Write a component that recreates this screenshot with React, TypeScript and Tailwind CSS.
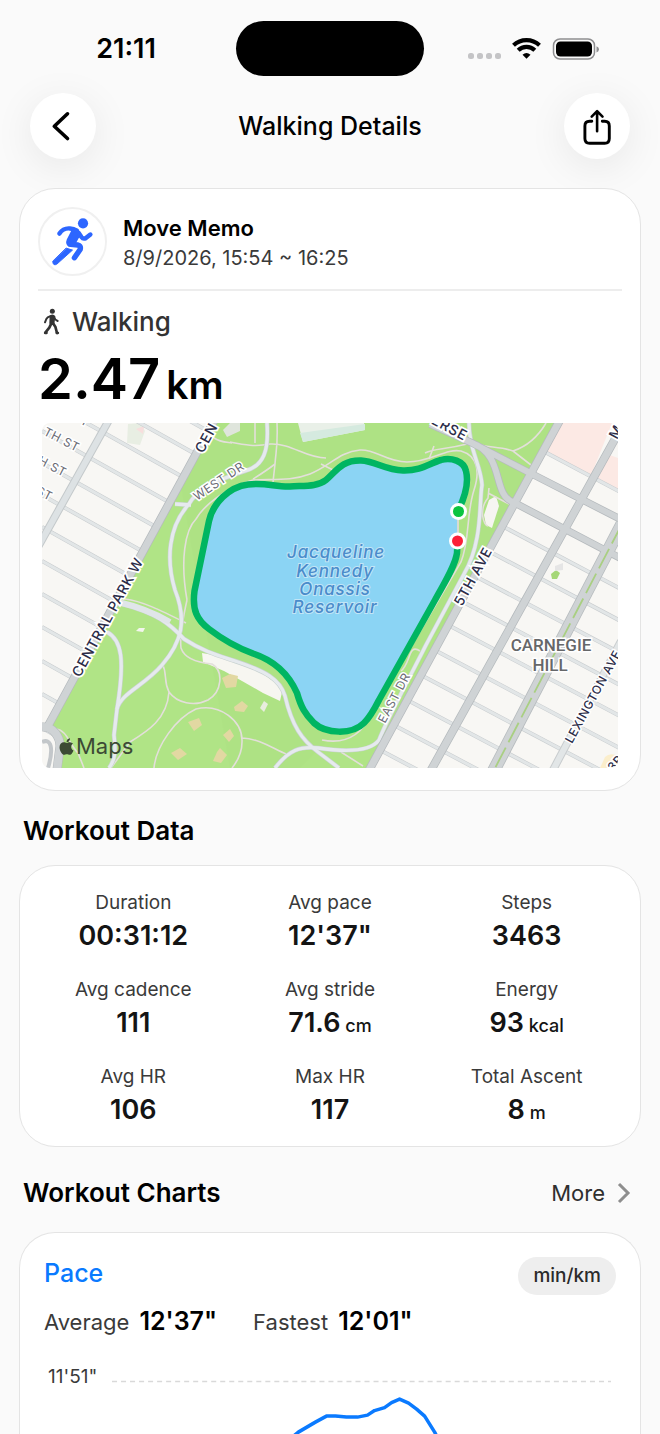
import type { ReactNode } from "react";
import { FaApple } from "react-icons/fa";

type Stat = {
  label: string;
  value: string;
  unit?: string;
};

const stats: Stat[] = [
  { label: "Duration", value: "00:31:12" },
  { label: "Avg pace", value: "12'37\"" },
  { label: "Steps", value: "3463" },
  { label: "Avg cadence", value: "111" },
  { label: "Avg stride", value: "71.6", unit: "cm" },
  { label: "Energy", value: "93", unit: "kcal" },
  { label: "Avg HR", value: "106" },
  { label: "Max HR", value: "117" },
  { label: "Total Ascent", value: "8", unit: "m" },
];

// where each cross street meets the avenue, in map units
const westStreets = [338, 368, 398, 431, 463, 495, 527, 561, 594, 627, 661, 694, 728];
const eastStreets = [451, 526, 551, 576, 601, 625, 650, 675, 700, 725, 750];

const route =
  "M458 511C464 499 469 483 466 471C464 461 451 457 441 460C430 463 421 471 403 470.5C385 470 375 461 361 460.5C341 460 336 472 326 480C317 487 304 485.5 290 486.5C275 487 265 482 248 484.5C229 487 213 503 209 521L194.500 591C192 610 197 620 209 629C222 639 238 648 253 653.500C276 661 289 675 297 693C301 707 305 714 314 723C326 734 352 735 364 723C370 717 375 708 379 700L435 600C443 585 455 567 457 553L457.500 541";

function StatusBar() {
  return (
    <div className="grid grid-cols-[1fr_188px_1fr] items-center px-4 pt-[21px]">
      <span className="pt-[2px] text-center text-[27px] font-semibold">21:11</span>
      <div className="h-[55px] rounded-full bg-black" />
      <div className="flex items-center justify-center">
        <svg viewBox="0 0 132 24" className="h-6 w-[132px]" aria-hidden="true">
          <g fill="#c4c4c6">
            <rect x="0" y="16" width="6" height="6" rx="2.500" />
            <rect x="9" y="16" width="6" height="6" rx="2.500" />
            <rect x="18" y="16" width="6" height="6" rx="2.500" />
            <rect x="27" y="16" width="6" height="6" rx="2.500" />
          </g>
          <g fill="none" stroke="#000" strokeWidth="4.200">
            <path d="M45.500 8.200A19 19 0 0 1 71.500 8.200" />
            <path d="M50.200 13.300A12 12 0 0 1 66.800 13.300" />
          </g>
          <path d="M54.500 17.700A6.200 6.200 0 0 1 62.500 17.700L58.500 21.700Z" />
          <rect x="85.500" y="2" width="41" height="20" rx="6.500" fill="none" stroke="#8e8e90" strokeWidth="1.500" />
          <rect x="88" y="4.500" width="36" height="15" rx="4.500" />
          <path d="M128.500 9.200Q131 10 131 12.200T128.500 15.500Z" fill="#8e8e90" />
        </svg>
      </div>
    </div>
  );
}

function RoundButton({ label, children }: { label: string; children: ReactNode }) {
  return (
    <button
      type="button"
      aria-label={label}
      className="flex size-[66px] items-center justify-center rounded-full bg-white shadow-[0_8px_40px_rgba(0,0,0,0.08)]"
    >
      {children}
    </button>
  );
}

function Header() {
  return (
    <header className="flex items-center justify-between px-[30px] pt-[17px]">
      <RoundButton label="Back">
        <svg viewBox="0 0 66 66" className="size-[66px]" fill="none" stroke="#000" strokeWidth="3.600" strokeLinecap="round" strokeLinejoin="round">
          <path d="M37.500 20.800L24.300 33.200L37.500 45.500" />
        </svg>
      </RoundButton>
      <h1 className="pt-[2px] text-[25px] font-medium">Walking Details</h1>
      <RoundButton label="Share">
        <svg viewBox="0 0 66 66" className="size-[66px]" fill="none" stroke="#000" strokeWidth="2.900" strokeLinecap="round" strokeLinejoin="round">
          <path d="M27.800 28.300H25.500Q20.900 28.300 20.900 33V45.500Q20.900 50.300 25.600 50.300H40.700Q45.300 50.300 45.300 45.500V33Q45.300 28.300 40.700 28.300H38.300" />
          <path d="M33.100 38.200V19M27.700 23.600L33.100 18.200L38.500 23.600" strokeWidth="2.600" />
        </svg>
      </RoundButton>
    </header>
  );
}

function RunnerLogo() {
  return (
    <svg viewBox="84 82 204 204" className="size-[69px] rounded-full border-2 border-[#f0f0f0]" aria-hidden="true">
      <g fill="none" stroke="#2d66ff" strokeLinecap="round" strokeLinejoin="round">
        <circle cx="219" cy="127" r="16" fill="#2d66ff" stroke="none" />
        <path d="M145 159Q157 141 178 143Q190 144 200 150" strokeWidth="14" />
        <path d="M186 152Q206 148 208 160L195 183Q190 196 176 196Q168 190 172 180Z" fill="#2d66ff" strokeWidth="9" />
        <path d="M206 158L214 170Q219 177 227 174L242 162" strokeWidth="14" />
        <path d="M180 193L203 195Q213 198 210 209L192 235" strokeWidth="17" />
        <path d="M167 205L186 211L137 255Q125 262 124 247Z" fill="#2d66ff" strokeWidth="3" />
      </g>
    </svg>
  );
}

function WalkIcon() {
  return (
    <svg viewBox="0 0 60 84" className="h-7 w-5" fill="none" stroke="#333" strokeLinecap="round" strokeLinejoin="round" aria-hidden="true">
      <circle cx="31" cy="10" r="7.500" fill="#333" stroke="none" />
      <path d="M26 24L25 45L34 48L37 26Q33 20 26 24Z" fill="#333" strokeWidth="6" />
      <path d="M25 25Q16 27 13 33L9 43" strokeWidth="6" />
      <path d="M36 27Q39 36 47 39" strokeWidth="6" />
      <path d="M28 46L22 59L10 74M32 44L40 56L45 75" strokeWidth="8" />
      <path d="M9 75H14M44 75H48" strokeWidth="7" />
    </svg>
  );
}

function RouteMap() {
  return (
    <div className="relative overflow-hidden rounded-lg">
      <svg viewBox="42 423 576 345" className="block w-full" role="img" aria-label="Route around the reservoir">
        <rect x="42" y="423" width="576" height="345" fill="#f8f7f4" />

        {/* city blocks west of the park */}
        <path d="M128 424L141 423L145 431L140 445L127 443Z" fill="#e8eee3" />
        <path d="M136 429L144 426L143 434Z" fill="#f7dedd" />
        <g stroke="#c8ccce" strokeWidth="4">
          {westStreets.map((y) => (
            <line key={y} x1="42" y1={y} x2="222" y2={y + 101} />
          ))}
        </g>
        <g stroke="#e2e6e7" strokeWidth="3">
          {westStreets.map((y) => (
            <line key={y} x1="42" y1={y} x2="222" y2={y + 101} />
          ))}
        </g>
        <path d="M109 420L38 547" stroke="#c3c8ca" strokeWidth="8" />
        <path d="M109 420L38 547" stroke="#dde2e4" strokeWidth="6" />

        {/* city blocks east of the park */}
        <path d="M560 423H612L590 478L547 453Z" fill="#fce9e4" />
        <path d="M607 454L618 458V490L596 479Z" fill="#fce9e4" />
        <g stroke="#c8ccce" strokeWidth="4">
          {eastStreets.map((y) => (
            <line key={y} x1={543 - (y - 451) * 0.545} y1={y} x2={743 - (y - 451) * 0.545} y2={y + 106} />
          ))}
        </g>
        <g stroke="#e2e6e7" strokeWidth="3">
          {eastStreets.map((y) => (
            <line key={y} x1={543 - (y - 451) * 0.545} y1={y} x2={743 - (y - 451) * 0.545} y2={y + 106} />
          ))}
        </g>
        <path d="M621 641L553 770" stroke="#c8ccce" strokeWidth="8" />
        <path d="M621 641L553 770" stroke="#e2e6e7" strokeWidth="6" />
        <path d="M551 574L556 570L560 573L557 579L552 579Z" fill="#a5d777" />
        <path d="M555 566L563 563L563 570L555 571Z" fill="#e5e5e5" />
        <path d="M600 768L605 757Q610 752 618 756V768Z" fill="#fbeecb" />

        {/* park */}
        <path d="M213 423H558L370 768H58L62 745L49 727Z" fill="#b0e486" />
        <path d="M180 480L213 423H558L495 540L450 620L300 768H230Z" fill="#aee184" opacity="0.600" />
        <path d="M298 423L303 442L365 430L364 423Z" fill="#e9f0e8" />
        <path d="M300 433L365 424V430L303 442Z" fill="#d5eadf" />
        <path d="M223 430L230 423H240V431L227 437Z" fill="#dfe5dc" />
        <path d="M489 500L496 496L499 506L492 528L486 525L484 515Z" fill="#f6f5f1" />
        <path d="M202 653L225 657L262 673L283 688L280 701L263 693L242 681L224 671L203 662Z" fill="#f7f6f1" />
        <path d="M139 628H145L143 632L136 631Z" fill="#f3f5ed" />
        <g fill="#e2d8a2">
          <path d="M188 722L199 718L202 725L194 731Z" />
          <path d="M222 678L230 674L238 676L236 687L226 688Z" />
          <path d="M223 735L230 729L234 736L229 742Z" />
          <path d="M171 753L180 748L187 754L178 760Z" />
          <path d="M217 752L220 748L227 755L221 763L213 761Z" />
          <path d="M234 707L242 701L248 706L244 712L235 711Z" />
        </g>
        <path d="M260 708L264 701L268 704L264 712Z" fill="#e9eddf" />

        {/* footpaths */}
        <g fill="none" stroke="#e3dfda" strokeWidth="1.600">
          <path d="M187 600C180 560 185 530 196 519C206 502 231 486 253 480C275 479 292 481 310 474C330 466 339 452 360 450C376 449 386 462 407 462C432 462 445 448 461 451C478 456 480 472 474 490C466 515 470 540 461 562L372 713C360 739 342 744 322 740" />
          <path d="M125 599C142 601 160 610 186 623M187 600C181 627 180 640 181 648C185 660 201 663 212 664C224 671 222 692 208 700C194 707 177 703 169 692C163 680 168 675 162 663M169 692C167 719 148 731 130 742L111 768" />
          <path d="M154 768C156 746 176 718 196 709C220 703 243 721 242 742C242 755 236 763 232 768M242 738C260 739 272 748 286 754" />
          <path d="M56 729C67 730 69 744 78 753L84 768" />
          <path d="M230 442C245 445 255 447 270 444C292 443 305 458 326 458M255 423V443M277 423C278 445 276 450 275 464L273 482M275 464C266 471 261 474 253 479M214 438C220 442 225 442 232 443" />
          <path d="M474 443C485 448 499 446 513 451L531 465M513 451C525 447 536 440 546 423M425 453C435 448 444 450 467 444M434 446L429 459" />
          <path d="M489 488L488 498C478 510 484 526 488 526M488 493L509 504M321 464L333 470M420 651C408 643 411 663 401 671M341 752L363 766" />
        </g>

        {/* park drives */}
        <g fill="none" stroke="#c8d2d0" strokeWidth="4.500">
          <path d="M267 423C269 450 264 466 245 471C213 481 196 491 189 504C168 527 166 560 175 590C187 620 182 642 162 665C144 686 121 693 117 709L114 735C116 752 115 760 109 768" />
          <path d="M107 632C122 640 125 660 117 709M175 504L191 505" />
          <path d="M122 604C157 613 170 624 184 639C204 652 220 656 235 661C265 671 280 679 285 696C292 726 302 740 318 752L339 768" />
          <path d="M275 768C289 750 300 746 318 748C345 752 370 752 379 740C388 717 413 671 426 645L464 574C483 542 479 502 482 485C481 465 469 450 469 423" />
        </g>
        <g fill="none" stroke="#e6eaee" strokeWidth="3.300">
          <path d="M267 423C269 450 264 466 245 471C213 481 196 491 189 504C168 527 166 560 175 590C187 620 182 642 162 665C144 686 121 693 117 709L114 735C116 752 115 760 109 768" />
          <path d="M107 632C122 640 125 660 117 709M175 504L191 505" />
          <path d="M122 604C157 613 170 624 184 639C204 652 220 656 235 661C265 671 280 679 285 696C292 726 302 740 318 752L339 768" />
          <path d="M275 768C289 750 300 746 318 748C345 752 370 752 379 740C388 717 413 671 426 645L464 574C483 542 479 502 482 485C481 465 469 450 469 423" />
        </g>
        <path d="M118 602C140 607 156 614 170 622" fill="none" stroke="#e0e5e9" strokeWidth="6" />

        {/* avenues */}
        <g fill="none" stroke="#b5babd" strokeWidth="8.500">
          <path d="M214 421L48 726M560 420L368 772M620 430L430 772" />
          <path d="M430 424L472 443L532 474L620 519M472 443C505 455 492 495 513 502L620 558" strokeWidth="7.500" />
          <path d="M622 524L493 772" strokeWidth="13" />
          <path d="M42 727C54 726 60 738 60 746L57 770" strokeWidth="9" />
        </g>
        <g fill="none" stroke="#cfd3d5" strokeWidth="7">
          <path d="M214 421L48 726M560 420L368 772M620 430L430 772" />
          <path d="M430 424L472 443L532 474L620 519M472 443C505 455 492 495 513 502L620 558" strokeWidth="6" />
          <path d="M622 524L493 772" strokeWidth="11.500" />
          <path d="M42 727C54 726 60 738 60 746L57 770" strokeWidth="8" />
        </g>
        <path d="M622 524L493 772" stroke="#a9cf82" strokeWidth="1.800" strokeDasharray="22 6" />
        <path d="M42 742C51 738 54 748 48 768" fill="none" stroke="#c3c7ca" strokeWidth="4" />

        {/* reservoir and walked route */}
        <path d={route} fill="#8bd4f4" />
        <path d="M458 511V541" stroke="#d8dbd2" strokeWidth="2" />
        <path d={route} fill="none" stroke="#00b562" strokeWidth="6.500" strokeLinecap="round" strokeLinejoin="round" />
        <circle cx="458.500" cy="511.500" r="8.500" fill="#fff" />
        <circle cx="458.500" cy="511.500" r="5.500" fill="#0cc441" />
        <circle cx="457.500" cy="541" r="8.500" fill="#fff" />
        <circle cx="457.500" cy="541" r="5.500" fill="#fb1f37" />

        {/* labels */}
        <g
          fill="#4a8ccb"
          stroke="#c2e5f6"
          strokeWidth="2"
          paintOrder="stroke"
          textAnchor="middle"
          className="text-[17px] font-medium tracking-wider italic"
        >
          <text x="336" y="558">Jacqueline</text>
          <text x="335" y="577">Kennedy</text>
          <text x="335" y="595">Onassis</text>
          <text x="335" y="613">Reservoir</text>
        </g>
        <g fill="#2b2c48" stroke="#fff" strokeWidth="3.500" paintOrder="stroke" className="text-[14px] font-medium tracking-wider">
          <text transform="translate(80 678) rotate(-61.400)">CENTRAL PARK W</text>
          <text transform="translate(203 454) rotate(-61.400)">CEN</text>
          <text transform="translate(462 607) rotate(-61.400)">5TH AVE</text>
          <text transform="translate(464 441) rotate(28)" textAnchor="end">ERSE</text>
          <text transform="translate(617 440) rotate(-61.400)">M</text>
        </g>
        <g fill="#2b2c48" stroke="#fff" strokeWidth="3" paintOrder="stroke" className="text-[12px] font-medium tracking-wider">
          <text transform="translate(572 744) rotate(-61.400)">LEXINGTON AVE</text>
          <text transform="translate(613 772) rotate(-48)">3R</text>
        </g>
        <g fill="#6b6c76" stroke="#fff" strokeWidth="3" paintOrder="stroke" className="text-[12px] tracking-wider">
          <text transform="translate(197 501) rotate(-34)">WEST DR</text>
          <text transform="translate(385 724) rotate(-62)">EAST DR</text>
          <text transform="translate(77 452) rotate(27)" textAnchor="end">TH ST</text>
          <text transform="translate(64 477) rotate(27)" textAnchor="end">H ST</text>
          <text transform="translate(50 501) rotate(27)" textAnchor="end">ST</text>
          <text transform="translate(87 427) rotate(27)" textAnchor="end">T</text>
        </g>
        <g
          fill="#666769"
          stroke="#fff"
          strokeWidth="3"
          paintOrder="stroke"
          textAnchor="middle"
          className="font-[Roboto,sans-serif] text-[17px] font-medium"
        >
          <text x="551" y="651">CARNEGIE</text>
          <text x="550" y="671">HILL</text>
        </g>
      </svg>
      <div className="absolute bottom-2 left-[15px] flex items-center text-[#3c4a35]">
        <FaApple className="size-[19px]" />
        <span className="text-[22px] leading-7">Maps</span>
      </div>
    </div>
  );
}

function StatCell({ label, value, unit }: Stat) {
  return (
    <div className="text-center">
      <dt className="text-[19px] leading-7 text-[#3a3a3a]">{label}</dt>
      <dd className="pt-px text-[27px] leading-9 font-semibold text-[#141414]">
        {value}
        {unit && <span className="text-lg font-medium"> {unit}</span>}
      </dd>
    </div>
  );
}

function PaceCard() {
  return (
    <section className="flex-1 overflow-hidden rounded-t-[36px] border-x border-t border-[#e4e4e4] bg-white px-6">
      <div className="flex items-start justify-between pt-6">
        <h3 className="text-[25px] leading-8 font-medium text-[#0a7aff]">Pace</h3>
        <button type="button" className="h-[38px] rounded-full bg-[#eeeeee] px-[15px] text-[19px] font-medium text-[#2a2a2a]">
          min/km
        </button>
      </div>
      <div className="flex gap-9 pt-2">
        <p className="flex items-baseline gap-[10px]">
          <span className="text-[22px] leading-9 text-[#3a3a3a]">Average</span>
          <span className="text-[25px] leading-9 font-semibold">12'37"</span>
        </p>
        <p className="flex items-baseline gap-[10px]">
          <span className="text-[22px] leading-9 text-[#3a3a3a]">Fastest</span>
          <span className="text-[25px] leading-9 font-semibold">12'01"</span>
        </p>
      </div>
      <div className="flex items-start pt-[23px] pr-[5px] pl-1">
        <span className="w-[64px] shrink-0 text-[19px] leading-7 text-[#3a3a3a]">11'51"</span>
        <svg viewBox="112 1364 498 200" className="min-w-0 flex-1" role="img" aria-label="Pace chart">
          <path d="M112 1382.500H610" stroke="#d9d9d9" strokeWidth="1.500" strokeDasharray="5 4" />
          <path
            d="M270 1456L298 1433L315 1423L326 1417H335L346 1418H357L367 1416L374 1411.500L384 1408.500L391 1403.500L399 1400L408 1404L416 1410L424 1417L434 1433L448 1460"
            fill="none"
            stroke="#0a7aff"
            strokeWidth="3.500"
            strokeLinejoin="round"
          />
        </svg>
      </div>
    </section>
  );
}

export default function App() {
  return (
    <div className="flex h-screen flex-col overflow-hidden bg-[#fafafa] font-[Inter,sans-serif] text-black">
      <StatusBar />
      <Header />
      <main className="flex flex-1 flex-col px-[19px] pt-[29px]">
        <section className="rounded-[36px] border border-[#e4e4e4] bg-white px-[18px] pt-[18px] pb-[22px]">
          <div className="flex items-center gap-4 border-b-2 border-[#ededed] pb-[13px]">
            <RunnerLogo />
            <div className="pt-[2px]">
              <h2 className="text-[22px] leading-[30px] font-semibold">Move Memo</h2>
              <p className="text-xl leading-[30px] text-[#3a3a3a]">8/9/2026, 15:54 ~ 16:25</p>
            </div>
          </div>
          <div className="flex items-center gap-[10px] pt-[13px] pb-[2px] pl-1">
            <WalkIcon />
            <span className="text-[26px] leading-9 font-medium text-[#333]">Walking</span>
          </div>
          <p className="flex items-baseline gap-[6px] pt-px pb-[2px] font-semibold">
            <span className="text-[56px] leading-[72px]">2.47</span>
            <span className="text-[39px] leading-[72px]">km</span>
          </p>
          <div className="px-1">
            <RouteMap />
          </div>
        </section>

        <h2 className="px-1 pt-[22px] pb-4 text-[26px] leading-9 font-semibold">Workout Data</h2>
        <section className="rounded-[36px] border border-[#e4e4e4] bg-white px-[15px] pt-[23px] pb-[18px]">
          <dl className="grid grid-cols-3 gap-y-[22px]">
            {stats.map((stat) => (
              <StatCell key={stat.label} {...stat} />
            ))}
          </dl>
        </section>

        <div className="flex items-center justify-between pt-7 pr-[10px] pb-[21px] pl-1">
          <h2 className="text-[26px] leading-9 font-semibold">Workout Charts</h2>
          <a href="#charts" className="flex items-center gap-3 text-[22px] text-[#2f2f2f]">
            More
            <svg viewBox="0 0 14 22" className="h-[22px] w-[14px]" fill="none" stroke="#8e8e8e" strokeWidth="3">
              <path d="M2 2L11 11L2 20" />
            </svg>
          </a>
        </div>
        <PaceCard />
      </main>
    </div>
  );
}
